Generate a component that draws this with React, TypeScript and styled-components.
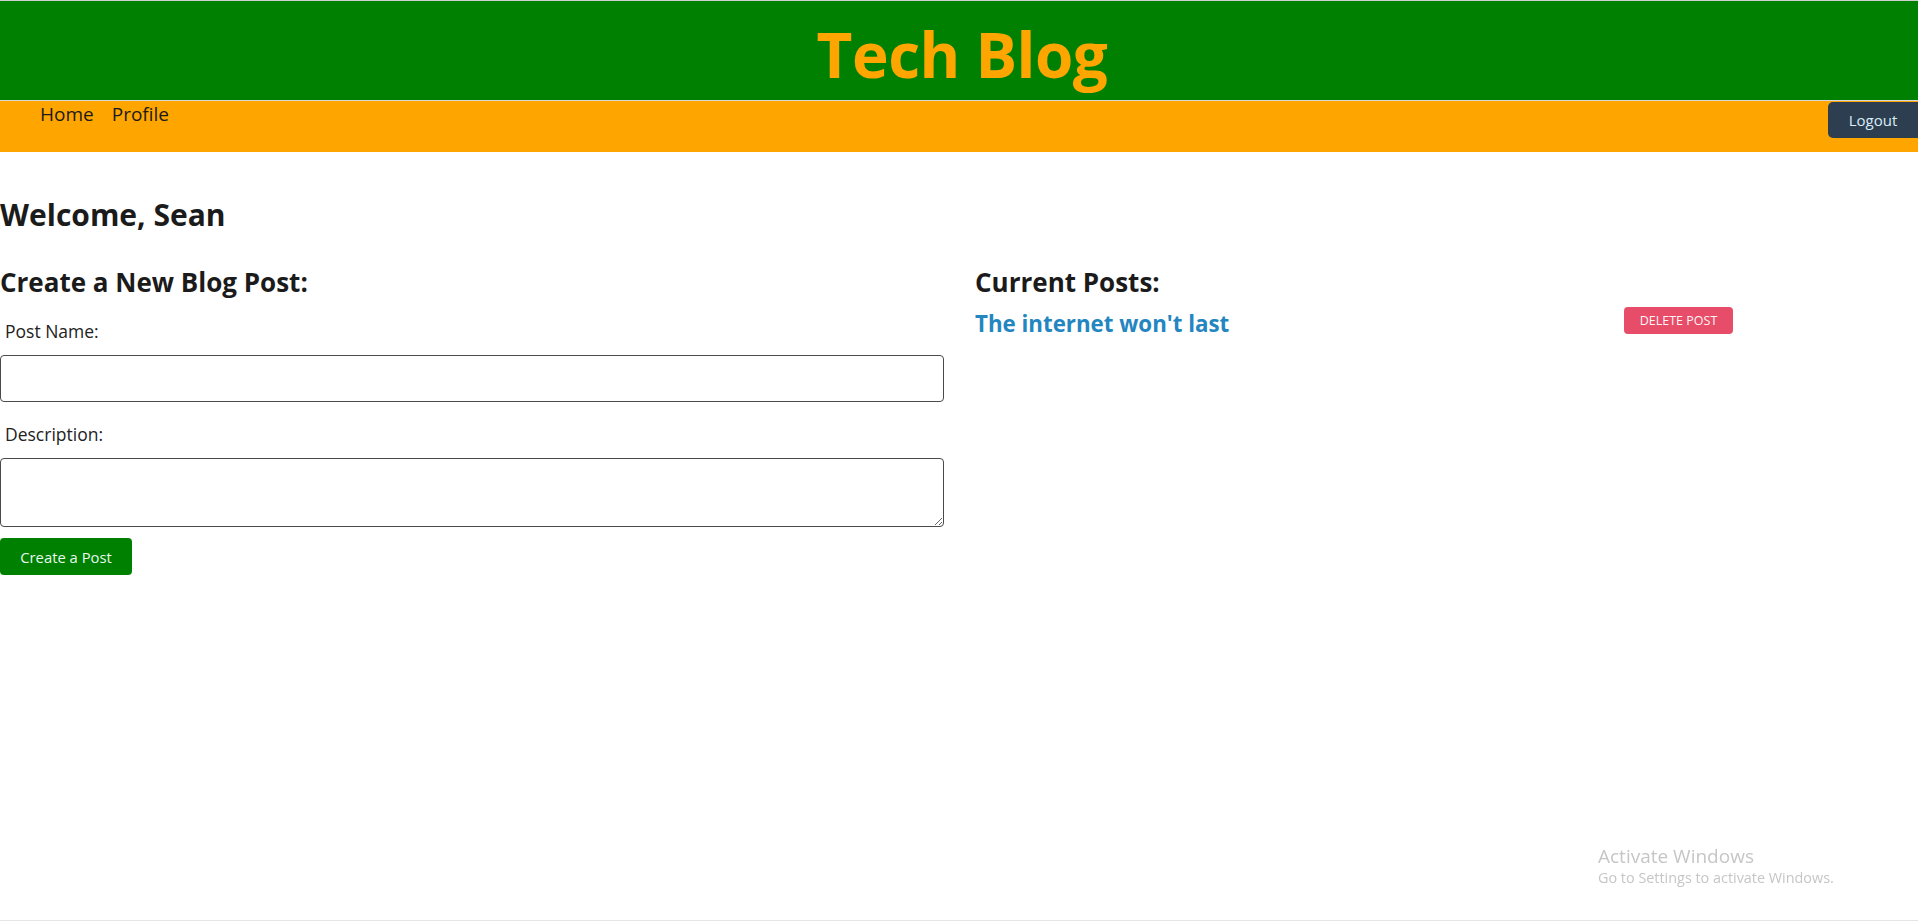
import React from "react";
import styled, { createGlobalStyle } from "styled-components";

const GlobalStyle = createGlobalStyle`
  html, body {
    margin: 0;
    padding: 0;
    background: #ffffff;
  }
  body {
    font-family: "Open Sans", "Noto Sans", "Liberation Sans", sans-serif;
    color: #1b1b1b;
  }
  * { box-sizing: border-box; }
`;

const Page = styled.div`
  min-height: 922px;
  border-top: 1px solid #cfcfcf;
`;

const Header = styled.header`
  height: 99px;
  background: #008000;
  display: flex;
  justify-content: center;
  padding-top: 21px;
`;

const Title = styled.h1`
  margin: 0 0 0 6px;
  font-size: 62px;
  line-height: 64px;
  font-weight: 700;
  color: #ffa500;
  letter-spacing: -0.5px;
`;

const Nav = styled.nav`
  height: 52px;
  background: #ffa500;
  border-top: 1px solid #d8d8d8;
  display: flex;
  align-items: flex-start;
  justify-content: space-between;
  padding-left: 40px;
`;

const NavLinks = styled.div`
  display: flex;
  gap: 18px;
  padding-top: 1px;
`;

const NavLink = styled.a`
  font-size: 19px;
  line-height: 24px;
  color: #1b1b1b;
  text-decoration: none;
  cursor: pointer;
`;

const LogoutButton = styled.button`
  margin-top: 1px;
  width: 90px;
  height: 36px;
  border: none;
  border-radius: 5px 0 0 5px;
  background: #2c3e50;
  color: #d9ecf7;
  font-family: inherit;
  font-size: 15px;
  cursor: pointer;
`;

const Main = styled.main`
  padding-top: 45px;
`;

const Welcome = styled.h2`
  margin: 0;
  font-size: 30px;
  line-height: 36px;
  font-weight: 700;
`;

const Columns = styled.div`
  display: grid;
  grid-template-columns: 944px 1fr;
  column-gap: 31px;
  margin-top: 34px;
`;

const Column = styled.section`
  display: flex;
  flex-direction: column;
`;

const SectionTitle = styled.h3`
  margin: 0;
  font-size: 26px;
  line-height: 30px;
  font-weight: 700;
`;

const Form = styled.form`
  display: flex;
  flex-direction: column;
  margin-top: 22px;
`;

const Label = styled.label<{ $gap?: number }>`
  display: block;
  padding-left: 5px;
  font-size: 17.5px;
  line-height: 24px;
  color: #222;
  margin-top: ${(p) => p.$gap ?? 0}px;
`;

const TextInput = styled.input`
  display: block;
  width: 944px;
  height: 47px;
  margin-top: 12px;
  border: 1px solid #4a4a4a;
  border-radius: 4px;
  font-family: inherit;
  font-size: 16px;
  padding: 0 8px;
`;

const TextArea = styled.textarea`
  display: block;
  width: 944px;
  height: 69px;
  margin-top: 12px;
  border: 1px solid #4a4a4a;
  border-radius: 4px;
  font-family: inherit;
  font-size: 16px;
  padding: 6px 8px;
`;

const CreateButton = styled.button`
  align-self: flex-start;
  margin-top: 11px;
  width: 132px;
  height: 37px;
  border: none;
  border-radius: 4px;
  background: #008000;
  color: #e8f8ee;
  font-family: inherit;
  font-size: 14.8px;
  cursor: pointer;
`;

const PostRow = styled.div`
  width: 758px;
  display: flex;
  justify-content: space-between;
  align-items: flex-start;
  margin-top: 10px;
`;

const PostTitle = styled.a`
  margin-top: 3px;
  font-size: 22.3px;
  line-height: 28px;
  font-weight: 700;
  color: #2386c1;
  text-decoration: none;
  cursor: pointer;
`;

const DeleteButton = styled.button`
  width: 109px;
  height: 27px;
  border: none;
  border-radius: 4px;
  background: #e74c68;
  color: #fff5f7;
  font-family: inherit;
  font-size: 12.5px;
  text-transform: uppercase;
  cursor: pointer;
`;

const Watermark = styled.div`
  position: fixed;
  left: 1598px;
  top: 843px;
  color: #c6c6c6;
  pointer-events: none;
`;

const WatermarkTitle = styled.div`
  font-size: 19px;
  line-height: 26px;
`;

const WatermarkText = styled.div`
  font-size: 14.4px;
  line-height: 18px;
`;

const BottomEdge = styled.div`
  position: fixed;
  left: 0;
  right: 0;
  bottom: 1px;
  height: 1px;
  background: #e6e6e6;
`;

export default function App() {
  return (
    <>
      <GlobalStyle />
      <Page>
        <Header>
          <Title>Tech Blog</Title>
        </Header>
        <Nav>
          <NavLinks>
            <NavLink>Home</NavLink>
            <NavLink>Profile</NavLink>
          </NavLinks>
          <LogoutButton>Logout</LogoutButton>
        </Nav>
        <Main>
          <Welcome>Welcome, Sean</Welcome>
          <Columns>
            <Column>
              <SectionTitle>Create a New Blog Post:</SectionTitle>
              <Form onSubmit={(e) => e.preventDefault()}>
                <Label htmlFor="post-name">Post Name:</Label>
                <TextInput id="post-name" type="text" />
                <Label htmlFor="post-desc" $gap={20}>Description:</Label>
                <TextArea id="post-desc" />
                <CreateButton type="submit">Create a Post</CreateButton>
              </Form>
            </Column>
            <Column>
              <SectionTitle>Current Posts:</SectionTitle>
              <PostRow>
                <PostTitle>The internet won't last</PostTitle>
                <DeleteButton>Delete Post</DeleteButton>
              </PostRow>
            </Column>
          </Columns>
        </Main>
      </Page>
      <Watermark>
        <WatermarkTitle>Activate Windows</WatermarkTitle>
        <WatermarkText>Go to Settings to activate Windows.</WatermarkText>
      </Watermark>
      <BottomEdge />
    </>
  );
}
